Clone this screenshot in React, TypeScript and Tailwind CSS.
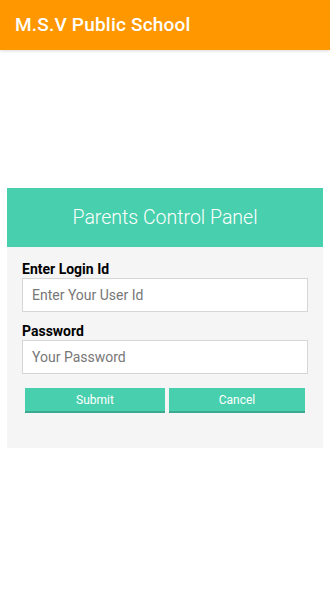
export default function App() {
  return (
    <div className="min-h-[592px] w-[330px] bg-white" style={{ fontFamily: "Roboto, 'Liberation Sans', sans-serif" }}>
      <div className="h-[50px] bg-[#ff9800] flex items-center px-[15px] shadow-[0_1px_3px_rgba(0,0,0,0.15)]">
        <span className="text-white text-[19px] font-medium tracking-[0.2px]">M.S.V Public School</span>
      </div>

      <div className="mt-[138px] mx-[7px] bg-[#f5f5f5]">
        <div className="h-[59px] bg-[#48cfad] flex items-center justify-center">
          <span className="text-white text-[19.5px] font-light">Parents Control Panel</span>
        </div>
        <div className="px-[15px] pt-[14px] pb-[35px]">
          <label className="block text-[14px] font-bold text-black leading-[16px]">Enter Login Id</label>
          <input
            placeholder="Enter Your User Id"
            className="mt-[1px] block w-[286px] h-[34px] bg-white border border-[#d6d6d6] px-[9px] text-[14px] text-[#333] placeholder:text-[#777] outline-none"
          />
          <label className="mt-[11px] block text-[14px] font-bold text-black leading-[16px]">Password</label>
          <input
            type="password"
            placeholder="Your Password"
            className="mt-[1px] block w-[286px] h-[34px] bg-white border border-[#d6d6d6] px-[9px] text-[14px] text-[#333] placeholder:text-[#777] outline-none"
          />
          <div className="mt-[14px] ml-[3px] flex gap-[4px]">
            <button className="w-[140px] h-[25px] bg-[#48cfad] border-b-2 border-[#3aa98d] text-white text-[12px]">Submit</button>
            <button className="w-[136px] h-[25px] bg-[#48cfad] border-b-2 border-[#3aa98d] text-white text-[12px]">Cancel</button>
          </div>
        </div>
      </div>
    </div>
  );
}
